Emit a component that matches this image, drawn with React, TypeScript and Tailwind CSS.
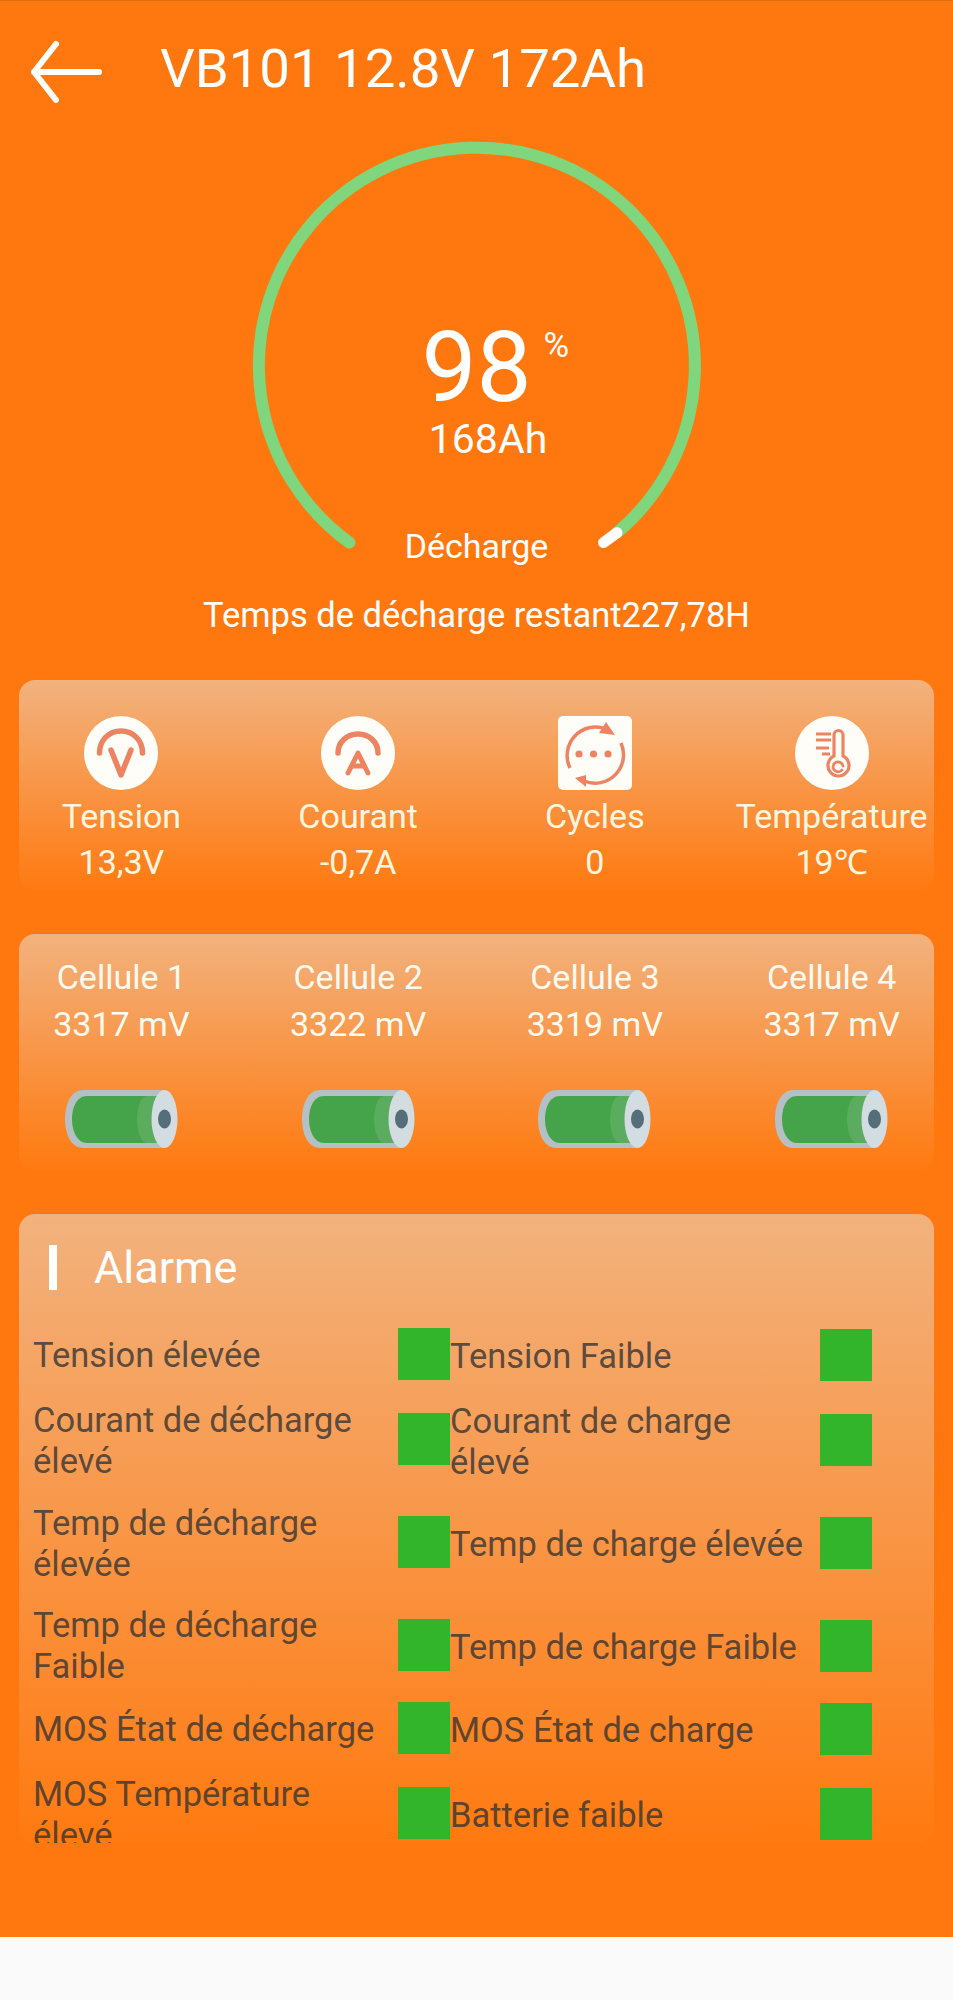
const ICON = "#ee8362";

function VoltIcon() {
  return (
    <svg viewBox="0 0 74 74" className="w-[74px] h-[74px]">
      <circle cx="37" cy="37" r="37" fill="#fffdf8" />
      <path d="M15.500 37C15.500 24 25 15 37 15s21.500 9 21.500 22" fill="none" stroke={ICON} strokeWidth="5.500" strokeLinecap="round" />
      <path d="M27 34l10 25 10-25" fill="none" stroke={ICON} strokeWidth="5.500" strokeLinecap="round" strokeLinejoin="round" />
    </svg>
  );
}

function AmpIcon() {
  return (
    <svg viewBox="0 0 74 74" className="w-[74px] h-[74px]">
      <circle cx="37" cy="37" r="37" fill="#fffdf8" />
      <path d="M17 37C17 26 26 18 37 18s20 8 20 19" fill="none" stroke={ICON} strokeWidth="5.500" strokeLinecap="round" />
      <path d="M27 57l10-20 10 20M31 50h12" fill="none" stroke={ICON} strokeWidth="5" strokeLinecap="round" strokeLinejoin="round" />
    </svg>
  );
}

function CycleIcon() {
  return (
    <svg viewBox="0 0 74 74" className="w-[74px] h-[74px]">
      <rect width="74" height="74" rx="5" fill="#fffdf8" />
      <path d="M12 52A28.500 28.500 0 0 1 48 13" fill="none" stroke={ICON} strokeWidth="3.500" />
      <path d="M48 6l9 13-16-2z" fill={ICON} />
      <path d="M63 27A28.500 28.500 0 0 1 26 65" fill="none" stroke={ICON} strokeWidth="3.500" />
      <path d="M17 62l11 9v-12z" fill={ICON} />
      <circle cx="21" cy="38" r="3.600" fill={ICON} />
      <circle cx="35.500" cy="38" r="3.600" fill={ICON} />
      <circle cx="50" cy="38" r="3.600" fill={ICON} />
    </svg>
  );
}

function TempIcon() {
  return (
    <svg viewBox="0 0 74 74" className="w-[74px] h-[74px]">
      <circle cx="37" cy="37" r="37" fill="#fffdf8" />
      <path d="M39 40V19a4.500 4.500 0 0 1 9 0v21a10.500 10.500 0 1 1-9 0z" fill="none" stroke={ICON} strokeWidth="3.200" />
      <path d="M48 50a5 5 0 1 0-1 4" fill="none" stroke={ICON} strokeWidth="2.800" strokeLinecap="round" />
      <path d="M21 18h15M21 24h15M21 32h13M27 38h8" fill="none" stroke={ICON} strokeWidth="2.800" />
    </svg>
  );
}

function BatteryCell() {
  return (
    <svg viewBox="0 0 113 58" className="w-[113px] h-[58px]">
      <path d="M99 0H18C6 0 0 14 0 29s6 29 18 29h81z" fill="#b4c0c4" />
      <path d="M22 6h67v47H22C12 53 7 41 7 29S12 6 22 6z" fill="#45a34a" />
      <path d="M82 6h10v47H82C76 53 72 41 72 29S76 6 82 6z" fill="#5aad5f" />
      <ellipse cx="99.500" cy="29" rx="13" ry="29" fill="#d3dce0" />
      <ellipse cx="99.500" cy="29" rx="6.500" ry="9.500" fill="#546e7a" />
    </svg>
  );
}

const STATS = [
  { label: "Tension", value: "13,3V", icon: <VoltIcon /> },
  { label: "Courant", value: "-0,7A", icon: <AmpIcon /> },
  { label: "Cycles", value: "0", icon: <CycleIcon /> },
  { label: "Température", value: "19℃", icon: <TempIcon /> },
];

const CELLS = [
  { label: "Cellule 1", value: "3317 mV" },
  { label: "Cellule 2", value: "3322 mV" },
  { label: "Cellule 3", value: "3319 mV" },
  { label: "Cellule 4", value: "3317 mV" },
];

const ALARMS = [
  { h: "h-[66px]", left: "Tension élevée", right: "Tension Faible" },
  { h: "h-[104px]", left: "Courant de décharge élevé", right: "Courant de charge élevé" },
  { h: "h-[102px]", left: "Temp de décharge élevée", right: "Temp de charge élevée" },
  { h: "h-[103px]", left: "Temp de décharge Faible", right: "Temp de charge Faible" },
  { h: "h-[63px]", left: "MOS État de décharge", right: "MOS État de charge" },
  { h: "h-[108px]", left: "MOS Température élevé", right: "Batterie faible" },
];

const CARD = "mx-[19px] rounded-[16px] bg-linear-to-b/srgb from-[#f2b27e] to-[#ff7a10]";

export default function App() {
  return (
    <div className="w-[953px] h-[2000px] bg-[#fafafa] font-['Roboto',sans-serif]">
      <div className="h-[1937px] bg-[#ff780f] border-t border-[#e06c12] overflow-hidden">
        <div className="flex items-center h-[135px]">
          <svg viewBox="0 0 72 64" className="w-[72px] h-[64px] ml-[30px] mt-[6px]">
            <path d="M26 4L4 32l22 28M4 32h65" fill="none" stroke="#fff" strokeWidth="6" strokeLinecap="round" strokeLinejoin="round" />
          </svg>
          <h1 className="ml-[58px] text-[54.500px] leading-none text-white">VB101 12.8V 172Ah</h1>
        </div>

        <div className="relative h-[500px]">
          <svg viewBox="0 0 953 500" className="absolute inset-0 w-[953px] h-[500px]">
            <path d="M349.500 406.600A218 218 0 1 1 617 396.700" fill="none" stroke="#7fd67c" strokeWidth="12" strokeLinecap="round" />
            <path d="M617 396.700L603.500 406.600" fill="none" stroke="#fff" strokeWidth="11" strokeLinecap="round" />
          </svg>
          <div className="relative flex flex-col items-center text-white">
            <div className="relative mt-[176px] text-[98px] leading-[112px]">
              98
              <span className="absolute left-[122px] top-[14px] text-[35px] leading-[40px]">%</span>
            </div>
            <div className="ml-[23px] text-[41px] leading-[50px] -mt-[10px]">168Ah</div>
            <div className="text-[34px] leading-[40px] mt-[62px]">Décharge</div>
            <div className="text-[34.500px] leading-[40px] mt-[29px]">Temps de décharge restant227,78H</div>
          </div>
        </div>

        <div className={`${CARD} h-[210px] mt-[44px] pt-[36px]`}>
          <div className="grid grid-cols-4 -mx-[16px] text-[#fff6e0] text-center">
            {STATS.map((s) => (
              <div key={s.label} className="flex flex-col items-center whitespace-nowrap">
                {s.icon}
                <div className="text-[34px] leading-[40px] mt-[6px]">{s.label}</div>
                <div className="text-[34px] leading-[40px] mt-[6px]">{s.value}</div>
              </div>
            ))}
          </div>
        </div>

        <div className={`${CARD} h-[236px] mt-[44px] pt-[23px]`}>
          <div className="grid grid-cols-4 -mx-[16px] text-[#fffaf0] text-center">
            {CELLS.map((c) => (
              <div key={c.label} className="flex flex-col items-center whitespace-nowrap">
                <div className="text-[34px] leading-[40px]">{c.label}</div>
                <div className="text-[34px] leading-[40px] mt-[7px]">{c.value}</div>
                <div className="mt-[46px]">
                  <BatteryCell />
                </div>
              </div>
            ))}
          </div>
        </div>

        <div className={`${CARD} h-[629px] mt-[44px] overflow-hidden`}>
          <div className="flex items-center h-[107px]">
            <div className="w-[8px] h-[45px] bg-white ml-[30px]" />
            <div className="ml-[37px] text-[45px] leading-none text-white">Alarme</div>
          </div>
          <div className="flex text-[34.500px] leading-[41px] text-[#333]/80">
            <div className="w-[431px] pl-[14px]">
              {ALARMS.map((a) => (
                <div key={a.left} className={`flex items-center ${a.h}`}>
                  <div className="w-[365px] shrink-0 pr-[8px] pt-[3px]">{a.left}</div>
                  <div className="w-[52px] h-[52px] shrink-0 bg-[#32b52a]" />
                </div>
              ))}
            </div>
            <div className="w-[422px] mt-[1px]">
              {ALARMS.map((a) => (
                <div key={a.right} className={`flex items-center ${a.h}`}>
                  <div className="w-[370px] shrink-0 pr-[10px] pt-[3px]">{a.right}</div>
                  <div className="w-[52px] h-[52px] shrink-0 bg-[#32b52a]" />
                </div>
              ))}
            </div>
          </div>
        </div>
      </div>
    </div>
  );
}
